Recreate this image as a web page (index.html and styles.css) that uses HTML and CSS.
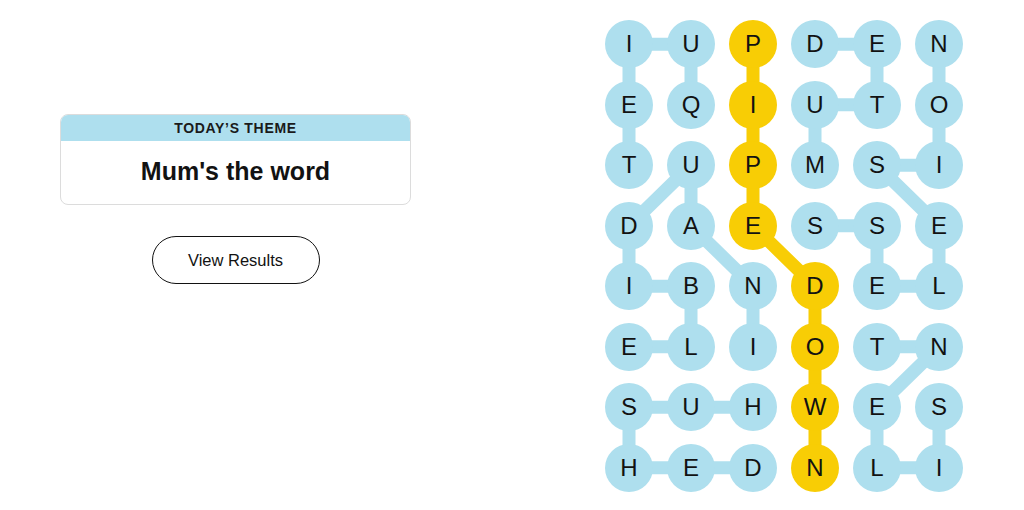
FILE: index.html
```html
<!DOCTYPE html>
<html lang="en">
<head>
<meta charset="utf-8">
<title>Strands</title>
<link rel="stylesheet" href="styles.css">
</head>
<body>
<main class="page">
  <section class="side">
    <div class="theme-card">
      <div class="theme-head">TODAY’S THEME</div>
      <div class="theme-title">Mum's the word</div>
    </div>
    <button class="results-btn" type="button">View Results</button>
  </section>
  <section class="board">
    <svg class="links" viewBox="0 0 372 484" width="372" height="484" aria-hidden="true">
      <g class="blue" stroke="#aedfee" stroke-width="13" stroke-linecap="round" fill="none">
        <!-- QUIET -->
        <line x1="93" y1="90.75" x2="93" y2="30.25"/>
        <line x1="93" y1="30.25" x2="31" y2="30.25"/>
        <line x1="31" y1="30.25" x2="31" y2="90.75"/>
        <line x1="31" y1="90.75" x2="31" y2="151.25"/>
        <!-- MUTED -->
        <line x1="217" y1="30.25" x2="279" y2="30.25"/>
        <line x1="279" y1="30.25" x2="279" y2="90.75"/>
        <line x1="279" y1="90.75" x2="217" y2="90.75"/>
        <line x1="217" y1="90.75" x2="217" y2="151.25"/>
        <!-- NOISELESS -->
        <line x1="341" y1="30.25" x2="341" y2="90.75"/>
        <line x1="341" y1="90.75" x2="341" y2="151.25"/>
        <line x1="341" y1="151.25" x2="279" y2="151.25"/>
        <line x1="279" y1="151.25" x2="341" y2="211.75"/>
        <line x1="341" y1="211.75" x2="341" y2="272.25"/>
        <line x1="341" y1="272.25" x2="279" y2="272.25"/>
        <line x1="279" y1="272.25" x2="279" y2="211.75"/>
        <line x1="279" y1="211.75" x2="217" y2="211.75"/>
        <!-- INAUDIBLE -->
        <line x1="155" y1="332.75" x2="155" y2="272.25"/>
        <line x1="155" y1="272.25" x2="93" y2="211.75"/>
        <line x1="93" y1="211.75" x2="93" y2="151.25"/>
        <line x1="93" y1="151.25" x2="31" y2="211.75"/>
        <line x1="31" y1="211.75" x2="31" y2="272.25"/>
        <line x1="31" y1="272.25" x2="93" y2="272.25"/>
        <line x1="93" y1="272.25" x2="93" y2="332.75"/>
        <line x1="93" y1="332.75" x2="31" y2="332.75"/>
        <!-- HUSHED -->
        <line x1="155" y1="393.25" x2="31" y2="393.25"/>
        <line x1="31" y1="393.25" x2="31" y2="453.75"/>
        <line x1="31" y1="453.75" x2="155" y2="453.75"/>
        <!-- SILENT -->
        <line x1="341" y1="393.25" x2="341" y2="453.75"/>
        <line x1="341" y1="453.75" x2="279" y2="453.75"/>
        <line x1="279" y1="453.75" x2="279" y2="393.25"/>
        <line x1="279" y1="393.25" x2="341" y2="332.75"/>
        <line x1="341" y1="332.75" x2="279" y2="332.75"/>
      </g>
      <g stroke="#f8cd05" stroke-width="13" stroke-linecap="round" fill="none">
        <line x1="155" y1="30.25" x2="155" y2="211.75"/>
        <line x1="155" y1="211.75" x2="217" y2="272.25"/>
        <line x1="217" y1="272.25" x2="217" y2="453.75"/>
      </g>
    </svg>
    <div class="grid">
      <span class="cell">I</span><span class="cell">U</span><span class="cell gold">P</span><span class="cell">D</span><span class="cell">E</span><span class="cell">N</span>
      <span class="cell">E</span><span class="cell">Q</span><span class="cell gold">I</span><span class="cell">U</span><span class="cell">T</span><span class="cell">O</span>
      <span class="cell">T</span><span class="cell">U</span><span class="cell gold">P</span><span class="cell">M</span><span class="cell">S</span><span class="cell">I</span>
      <span class="cell">D</span><span class="cell">A</span><span class="cell gold">E</span><span class="cell">S</span><span class="cell">S</span><span class="cell">E</span>
      <span class="cell">I</span><span class="cell">B</span><span class="cell">N</span><span class="cell gold">D</span><span class="cell">E</span><span class="cell">L</span>
      <span class="cell">E</span><span class="cell">L</span><span class="cell">I</span><span class="cell gold">O</span><span class="cell">T</span><span class="cell">N</span>
      <span class="cell">S</span><span class="cell">U</span><span class="cell">H</span><span class="cell gold">W</span><span class="cell">E</span><span class="cell">S</span>
      <span class="cell">H</span><span class="cell">E</span><span class="cell">D</span><span class="cell gold">N</span><span class="cell">L</span><span class="cell">I</span>
    </div>
  </section>
</main>
</body>
</html>
```

FILE: styles.css
```css
* { box-sizing: border-box; }

html, body {
  margin: 0;
  padding: 0;
  background: #ffffff;
  color: #121212;
  font-family: "Liberation Sans", Arial, sans-serif;
}

.page {
  display: flex;
  align-items: flex-start;
  width: 1024px;
  height: 510px;
  overflow: hidden;
}

.side {
  width: 471px;
  padding: 114px 60px 0 60px;
  display: flex;
  flex-direction: column;
  align-items: center;
}

.theme-card {
  width: 351px;
  border: 1px solid #dcdcdc;
  border-radius: 8px;
  overflow: hidden;
  background: #fff;
}

.theme-head {
  height: 26px;
  background: #aedfee;
  font-size: 14px;
  font-weight: 700;
  letter-spacing: 0.7px;
  line-height: 27px;
  text-align: center;
  color: #1a1a1a;
}

.theme-title {
  height: 63px;
  font-size: 25px;
  font-weight: 700;
  line-height: 61px;
  text-align: center;
  color: #121212;
}

.results-btn {
  margin-top: 31px;
  width: 168px;
  height: 48px;
  border: 1px solid #121212;
  border-radius: 24px;
  background: #fff;
  font-family: "Liberation Sans", Arial, sans-serif;
  font-size: 16.5px;
  color: #121212;
  padding: 0;
}

.board {
  position: relative;
  margin-left: 127px;
  margin-top: 13.75px;
  width: 372px;
  height: 484px;
}

.links {
  position: absolute;
  left: 0;
  top: 0;
}

.grid {
  position: relative;
  display: grid;
  grid-template-columns: repeat(6, 62px);
  grid-template-rows: repeat(8, 60.5px);
}

.cell {
  justify-self: center;
  align-self: center;
  width: 48px;
  height: 48px;
  border-radius: 50%;
  background: #aedfee;
  display: flex;
  align-items: center;
  justify-content: center;
  font-size: 24px;
  line-height: 1;
  color: #121212;
}

.cell.gold {
  background: #f8cd05;
}
```
